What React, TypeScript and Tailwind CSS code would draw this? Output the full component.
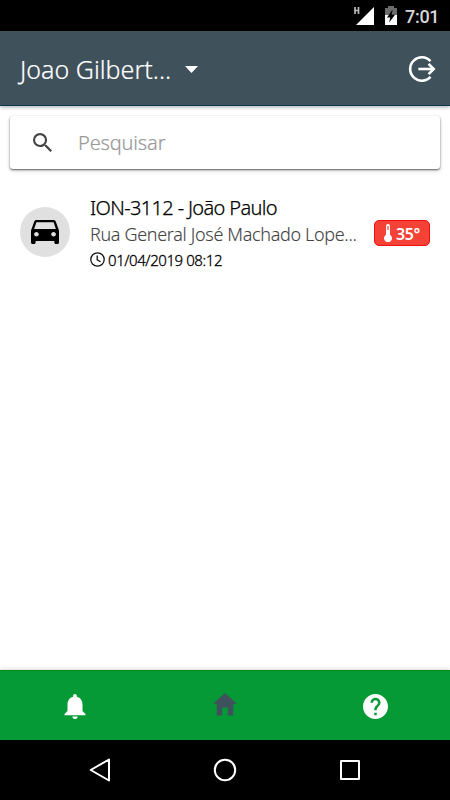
import React from "react";

function StatusBar() {
  return (
    <div className="flex h-[31px] shrink-0 items-start justify-end bg-black pr-[12px]">
      <svg className="mt-[6px] h-[20px] w-[22px]" viewBox="0 0 22 20">
        <path d="M21 1V19H3Z" fill="#fff" />
        <path d="M2 1V8M5.5 1V8M2 4.5H5.5" stroke="#bbb" strokeWidth="1.7" fill="none" />
      </svg>
      <svg className="mt-[6px] ml-[9px] h-[20px] w-[14px]" viewBox="0 0 14 20">
        <path d="M1 2H4V0H10V2H13V10H1Z" fill="#6b6b6b" />
        <path d="M1 9H13V19H1Z" fill="#fff" />
        <path d="M8.6 3.5L3 11.5H6.2L5.2 16.5L11 8.8H7.6Z" fill="#000" />
      </svg>
      <span className="mt-[5px] ml-[7px] w-[33px] whitespace-nowrap font-['Roboto',sans-serif] text-[18px] leading-[23px] font-medium tracking-[-0.3px] text-[#d8d8d8]">
        7:01
      </span>
    </div>
  );
}

function Header() {
  return (
    <header className="relative z-10 flex h-[75px] shrink-0 items-center border-b border-[#0d3850] bg-[#3f515b] pt-[2px] pr-[14px] pl-[20px] shadow-[0_1px_4px_rgba(0,0,0,0.35)]">
      <span className="w-[151px] whitespace-nowrap text-[25px] leading-[34px] font-light tracking-[0.02px] text-white [-webkit-text-stroke:0.2px]">
        Joao Gilbert...
      </span>
      <svg className="ml-[14px] h-[7px] w-[13px]" viewBox="0 0 13 7">
        <path d="M0 0H13L6.5 7Z" fill="#fff" />
      </svg>
      <svg className="ml-auto h-[28px] w-[28px]" viewBox="0 0 28 28" fill="none" stroke="#fff" strokeWidth="2.6">
        <path d="M22.5 6.1A11.7 11.7 0 1 0 22.5 21.9" />
        <path d="M10.3 14H25" />
        <path d="M20.6 8.9L25.7 14L20.6 19.1" />
      </svg>
    </header>
  );
}

function SearchBox() {
  return (
    <div className="mx-[10px] mt-[10px] flex h-[53px] shrink-0 items-center rounded-[3px] bg-white pl-[23px] shadow-[0_1px_2px_rgba(0,0,0,0.6),0_2px_5px_rgba(0,0,0,0.12)]">
      <svg className="h-[19px] w-[19px]" viewBox="3 3 17.49 17.49" fill="#444">
        <path d="M15.5 14h-.79l-.28-.27A6.471 6.471 0 0 0 16 9.5 6.5 6.5 0 1 0 9.5 16c1.61 0 3.09-.59 4.23-1.57l.27.28v.79l5 4.99L20.49 19l-4.99-5zm-6 0C7.01 14 5 11.99 5 9.5S7.01 5 9.5 5 14 7.01 14 9.5 11.99 14 9.5 14z" />
      </svg>
      <span className="ml-[26px] whitespace-nowrap text-[20px] leading-[28px] font-light tracking-[-0.15px] text-[#999] [-webkit-text-stroke:0.2px]">
        Pesquisar
      </span>
    </div>
  );
}

function VehicleRow() {
  return (
    <div className="mt-[26px] flex shrink-0 items-start pr-[20px] pl-[20px]">
      <div className="mt-[12px] flex h-[50px] w-[50px] items-center justify-center rounded-full bg-[#e0e0e0]">
        <svg className="h-[24px] w-[28px]" viewBox="3 5 18 16" preserveAspectRatio="none">
          <path d="M18.92 6.01C18.72 5.42 18.16 5 17.5 5h-11c-.66 0-1.21.42-1.42 1.01L3 12v8c0 .55.45 1 1 1h1c.55 0 1-.45 1-1v-1h12v1c0 .55.45 1 1 1h1c.55 0 1-.45 1-1v-8l-2.08-5.99zM6.5 16c-.83 0-1.5-.67-1.5-1.5S5.67 13 6.5 13s1.5.67 1.5 1.5S7.33 16 6.5 16zm11 0c-.83 0-1.5-.67-1.5-1.5s.67-1.5 1.5-1.5 1.5.67 1.5 1.5-.67 1.5-1.5 1.5zM5 11l1.5-4.5h11L19 11H5z" />
        </svg>
      </div>
      <div className="ml-[20px] flex w-[284px] flex-col whitespace-nowrap">
        <span className="text-[20px] leading-[26px] font-light tracking-[-0.65px] text-black [-webkit-text-stroke:0.25px]">
          ION-3112 - João Paulo
        </span>
        <span className="text-[18px] leading-[26px] font-light tracking-[-0.33px] text-[#444] [-webkit-text-stroke:0.1px]">
          Rua General José Machado Lope...
        </span>
        <span className="flex h-[26px] items-center text-[15px] leading-[26px] font-light tracking-[-0.42px] text-black [-webkit-text-stroke:0.3px]">
          <svg className="mt-[-2px] mr-[3px] h-[15px] w-[15px]" viewBox="0 0 15 15" fill="none" stroke="#111" strokeWidth="1.3">
            <circle cx="7.5" cy="7.5" r="6.7" />
            <path d="M7.2 3.5V7.8L10.6 9.8" />
          </svg>
          01/04/2019 08:12
        </span>
      </div>
      <div className="mt-[25px] flex h-[26px] w-[56px] items-center rounded-[5px] border border-[#f80c0c] bg-[#f44336] pl-[9px]">
        <svg className="h-[18px] w-[8px] shrink-0" viewBox="0 0 8 18">
          <path d="M2 2.2A2 2.2 0 0 1 6 2.2V10.7A4 4 0 1 1 2 10.7Z" fill="#fff" />
          <path d="M4 2V6" stroke="#f44336" strokeWidth="1.2" />
        </svg>
        <span className="mt-[1px] ml-[4px] whitespace-nowrap text-[16px] leading-[24px] font-semibold tracking-[-0.4px] text-white">
          35°
        </span>
      </div>
    </div>
  );
}

function TabBar() {
  return (
    <nav className="grid h-[70px] shrink-0 grid-cols-3 items-center justify-items-center border-t border-[#058a0c] bg-[#059a35] shadow-[0_-1px_4px_rgba(0,0,0,0.15)]">
      <svg className="mt-[1px] h-[25px] w-[22px]" viewBox="0 0 22 25" fill="#fff">
        <path d="M11 0C12.1 0 12.8 .8 12.8 1.8V2.7C16.5 3.6 18.5 6.7 18.5 10.5V17L21.5 20V21.2H.5V20L3.5 17V10.5C3.5 6.7 5.5 3.6 9.2 2.7V1.8C9.2 .8 9.9 0 11 0ZM8.4 22.5H13.6A2.6 2.5 0 0 1 8.4 22.5Z" />
      </svg>
      <svg className="-mt-[3px] h-[23px] w-[24px]" viewBox="0 0 24 23" fill="#3f515b">
        <path d="M12 0L24 10.7H20.3V22.5H14.8V14.5H9.2V22.5H3.7V10.7H0Z" />
      </svg>
      <svg className="mt-[1px] h-[25px] w-[25px]" viewBox="2 2 20 20" fill="#fff">
        <path d="M12 2C6.48 2 2 6.48 2 12s4.48 10 10 10 10-4.48 10-10S17.52 2 12 2zm1 17h-2v-2h2v2zm2.07-7.75l-.9.92C13.45 12.9 13 13.5 13 15h-2v-.5c0-1.1.45-2.1 1.17-2.83l1.24-1.26c.37-.36.59-.86.59-1.41 0-1.1-.9-2-2-2s-2 .9-2 2H8c0-2.21 1.79-4 4-4s4 1.79 4 4c0 .88-.36 1.68-.93 2.25z" />
      </svg>
    </nav>
  );
}

function SystemNav() {
  return (
    <div className="flex h-[60px] shrink-0 items-center justify-between bg-black pr-[89px] pl-[89px]">
      <svg className="h-[24px] w-[22px]" viewBox="0 0 22 24" fill="none" stroke="#fff" strokeWidth="2" strokeLinejoin="round">
        <path d="M20 1.5V22.5L1.7 12Z" />
      </svg>
      <svg className="h-[24px] w-[24px]" viewBox="0 0 24 24" fill="none" stroke="#fff" strokeWidth="2">
        <circle cx="12" cy="12" r="10.2" />
      </svg>
      <svg className="h-[22px] w-[22px]" viewBox="0 0 22 22" fill="none" stroke="#fff" strokeWidth="2" strokeLinejoin="round">
        <path d="M2 2H20V20H2Z" />
      </svg>
    </div>
  );
}

export default function App() {
  return (
    <div className="flex h-[800px] w-[450px] flex-col overflow-hidden bg-white font-['Noto_Sans','Open_Sans',sans-serif]">
      <StatusBar />
      <Header />
      <main className="flex flex-1 flex-col">
        <SearchBox />
        <VehicleRow />
      </main>
      <TabBar />
      <SystemNav />
    </div>
  );
}
